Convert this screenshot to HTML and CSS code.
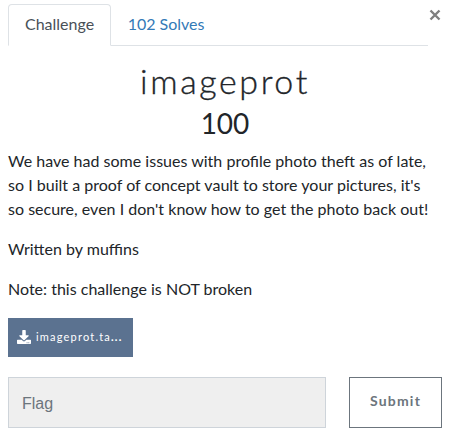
FILE: index.html
```html
<!DOCTYPE html>
<html lang="en">
<head>
<meta charset="utf-8">
<title>imageprot</title>
<link rel="stylesheet" href="styles.css">
</head>
<body>
<main class="modal">
  <button class="close" aria-label="Close"><svg viewBox="0 0 12 12" width="12" height="12"><path d="M1.500 1.500l9 9M10.500 1.500l-9 9"/></svg></button>
  <nav class="tabs">
    <a class="tab active">Challenge</a>
    <a class="tab">102 Solves</a>
  </nav>
  <h2 class="name">imageprot</h2>
  <h3 class="value">100</h3>
  <div class="desc">
    <p>We have had some issues with profile photo theft as of late,<br>so I built a proof of concept vault to store your pictures, it's<br>so secure, even I don't know how to get the photo back out!</p>
    <p>Written by muffins</p>
    <p>Note: this challenge is NOT broken</p>
  </div>
  <a class="file"><svg class="icon" viewBox="0 0 512 512" width="14" height="14"><path d="M216 0h80c13.300 0 24 10.700 24 24v168h87.700c17.800 0 26.700 21.500 14.100 34.100L269.700 378.300c-7.500 7.500-19.800 7.500-27.300 0L90.100 226.100c-12.600-12.600-3.700-34.100 14.100-34.100H192V24c0-13.300 10.700-24 24-24zm296 376v112c0 13.300-10.700 24-24 24H24c-13.300 0-24-10.700-24-24V376c0-13.300 10.700-24 24-24h146.700l49 49c20.100 20.100 52.500 20.100 72.600 0l49-49H488c13.300 0 24 10.700 24 24zm-124 88c0-11-9-20-20-20s-20 9-20 20 9 20 20 20 20-9 20-20zm64 0c0-11-9-20-20-20s-20 9-20 20 9 20 20 20 20-9 20-20z"/></svg><span class="filename">imageprot.ta<b>...</b></span></a>
  <form class="submit-row">
    <input class="flag" type="text" placeholder="Flag">
    <button class="submit" type="button">Submit</button>
  </form>
</main>
</body>
</html>
```
FILE: styles.css
```css
* { box-sizing: border-box; }
body {
  margin: 0;
  background: #fff;
  color: #212529;
  font: 16px/24px Lato, "Liberation Sans", sans-serif;
}
.modal {
  position: relative;
  width: 450px;
  height: 435px;
  padding: 4px 8px 0;
}
.close {
  position: absolute;
  top: 9px;
  left: 429px;
  width: 12px;
  height: 12px;
  padding: 0;
  border: 0;
  background: none;
}
.close svg { display: block; }
.close path { stroke: #7f7f7f; stroke-width: 2.4; fill: none; }
.tabs {
  display: flex;
  width: 420px;
  height: 42px;
  border-bottom: 1px solid #dee2e6;
}
.tab {
  height: 42px;
  padding: 7px 16px 8px 15.5px;
  border: 1px solid transparent;
  border-radius: 4px 4px 0 0;
  color: #337ab7;
}
.tab.active {
  padding-left: 16px;
  color: #495057;
  background: #fff;
  border-color: #dee2e6 #dee2e6 #fff;
}
.name, .value {
  width: 434px;
  margin: 0;
  text-align: center;
}
.name {
  margin-top: 15px;
  font-size: 34px;
  line-height: 40px;
  font-weight: 300;
  letter-spacing: 2.6px;
  -webkit-text-stroke: .35px #212529;
}
.value {
  margin-top: 5px;
  font-size: 28px;
  line-height: 34px;
  font-weight: 400;
}
.desc { margin-top: 9px; white-space: nowrap; word-spacing: .06px; }
.desc p { margin: 0 0 16px; }
.file {
  display: flex;
  align-items: center;
  width: 125px;
  height: 39px;
  margin-top: 17px;
  padding: 0 9px 1px;
  background: #5b7290;
  color: #fff;
}
.icon { fill: #fff; }
.filename {
  margin-left: 5px;
  font-size: 11px;
  letter-spacing: 1.2px;
  white-space: nowrap;
}
.filename b { font-weight: 900; }
.submit-row {
  display: flex;
  justify-content: space-between;
  margin-top: 20px;
}
.flag {
  width: 318px;
  height: 51px;
  padding: 2px 13px 0;
  border: 1px solid #ced4da;
  border-radius: 0;
  background: #efefef;
  font: 16px "Liberation Sans", sans-serif;
}
.flag::placeholder { color: #6c757d; opacity: 1; }
.submit {
  width: 93px;
  height: 51px;
  padding: 0 0 4px;
  border: 1px solid #6c757d;
  background: #fff;
  color: #6c757d;
  font: 700 14px Lato, sans-serif;
  letter-spacing: 1.2px;
}
```
